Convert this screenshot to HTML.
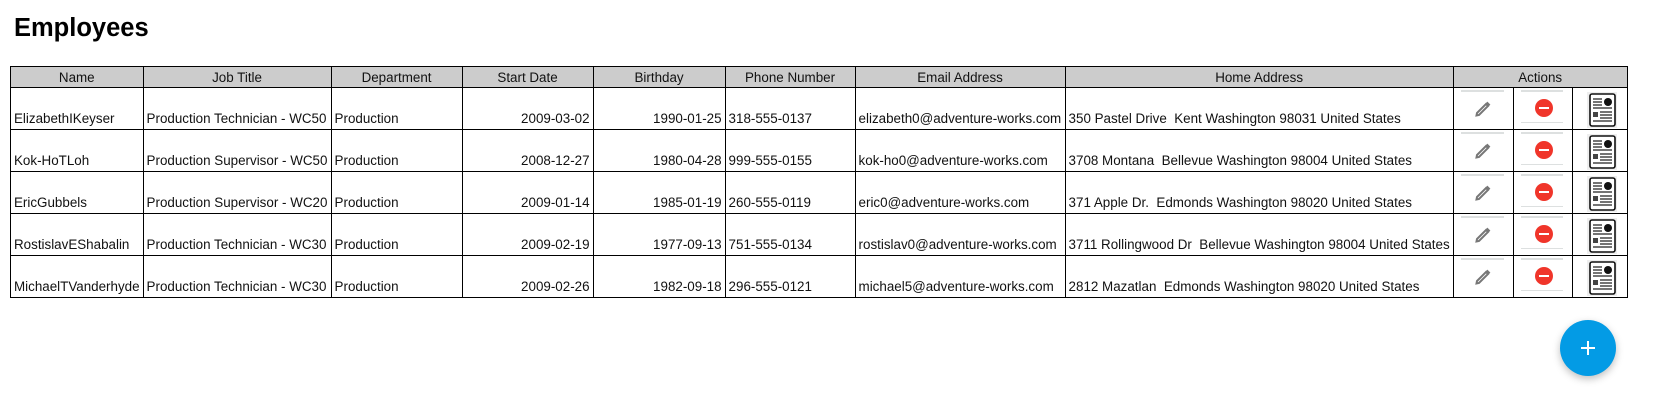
<!DOCTYPE html>
<html><head><meta charset="utf-8"><style>
body{margin:0;background:#fff;font-family:"Liberation Sans",Arial,sans-serif;width:1661px;height:415px;overflow:hidden;position:relative}
h1{position:absolute;left:14px;top:14px;margin:0;font-size:25.5px;font-weight:bold;color:#000}
table{position:absolute;left:10px;top:66px;border-collapse:collapse;table-layout:fixed;font-size:13.4px;color:#111}
th,td{border:1.5px solid #000;padding:0 3px;white-space:nowrap;overflow:visible}
th{background:#ccc;font-weight:normal;height:20px;padding:0 3px;text-align:center}
td{height:38px;vertical-align:bottom;padding-bottom:3px;padding-top:0}
td.r{text-align:right}
td.a{padding:0;position:relative;vertical-align:top}
.ln{position:absolute;height:2px;background:#dde0e0;left:7px;right:9px}
.pen{position:absolute;left:20px;top:12px}
.del{position:absolute;left:21px;top:11px;width:18px;height:18px;border-radius:50%;background:#f0352a}
.del:after{content:"";position:absolute;left:4px;top:8px;width:10px;height:2.4px;background:#fff}
.rep{position:absolute;left:14px;top:4px;width:30px;height:36px;background:#eee;z-index:2}
.fab{position:absolute;left:1560px;top:320px;width:56px;height:56px;border-radius:50%;background:#039be5;box-shadow:0 3px 8px rgba(0,0,0,.25)}
.fab:before{content:"";position:absolute;left:21px;top:27px;width:14px;height:2px;background:#fff}
.fab:after{content:"";position:absolute;left:27px;top:21px;width:2px;height:14px;background:#fff}
</style></head><body>
<h1>Employees</h1>
<table>
<colgroup><col style="width:132px"><col style="width:188px"><col style="width:131px"><col style="width:131px"><col style="width:132px"><col style="width:130px"><col style="width:210px"><col style="width:387px"><col style="width:60px"><col style="width:59px"><col style="width:55px"></colgroup>
<tr><th>Name</th><th>Job Title</th><th>Department</th><th>Start Date</th><th>Birthday</th><th>Phone Number</th><th>Email Address</th><th>Home Address</th><th colspan="3">Actions</th></tr>
<tr><td>ElizabethIKeyser</td><td>Production Technician - WC50</td><td>Production</td><td class="r">2009-03-02</td><td class="r">1990-01-25</td><td>318-555-0137</td><td>elizabeth0@adventure-works.com</td><td>350 Pastel Drive&nbsp; Kent Washington 98031 United States</td>
<td class="a"><div class="ln" style="top:2px"></div><svg class="pen" width="18" height="18" viewBox="0 0 18 18"><path d="M3 13 L12 4 L14 6 L5 15 L2.5 15.5 Z" fill="none" stroke="#777" stroke-width="2"/><path d="M12.5 2.5 L15.5 5.5" stroke="#777" stroke-width="2.5"/></svg></td>
<td class="a"><div class="ln" style="top:2px"></div><div class="del"></div><div class="ln" style="top:34px;height:1px"></div></td>
<td class="a"><svg class="rep" viewBox="0 0 30 36"><rect x="3" y="2" width="25" height="32" rx="2" fill="#fff" stroke="#111" stroke-width="1.6"/><path d="M6 7h9M6 10h9M6 13h9M6 16h19M13 20h12M13 23h12M13 26h12M6 29h19" stroke="#222" stroke-width="1.2"/><circle cx="21" cy="10" r="4" fill="#111"/><rect x="6" y="20" width="5" height="5" fill="#444"/></svg></td></tr>
<tr><td>Kok-HoTLoh</td><td>Production Supervisor - WC50</td><td>Production</td><td class="r">2008-12-27</td><td class="r">1980-04-28</td><td>999-555-0155</td><td>kok-ho0@adventure-works.com</td><td>3708 Montana&nbsp; Bellevue Washington 98004 United States</td>
<td class="a"><div class="ln" style="top:2px"></div><svg class="pen" width="18" height="18" viewBox="0 0 18 18"><path d="M3 13 L12 4 L14 6 L5 15 L2.5 15.5 Z" fill="none" stroke="#777" stroke-width="2"/><path d="M12.5 2.5 L15.5 5.5" stroke="#777" stroke-width="2.5"/></svg></td>
<td class="a"><div class="ln" style="top:2px"></div><div class="del"></div><div class="ln" style="top:34px;height:1px"></div></td>
<td class="a"><svg class="rep" viewBox="0 0 30 36"><rect x="3" y="2" width="25" height="32" rx="2" fill="#fff" stroke="#111" stroke-width="1.6"/><path d="M6 7h9M6 10h9M6 13h9M6 16h19M13 20h12M13 23h12M13 26h12M6 29h19" stroke="#222" stroke-width="1.2"/><circle cx="21" cy="10" r="4" fill="#111"/><rect x="6" y="20" width="5" height="5" fill="#444"/></svg></td></tr>
<tr><td>EricGubbels</td><td>Production Supervisor - WC20</td><td>Production</td><td class="r">2009-01-14</td><td class="r">1985-01-19</td><td>260-555-0119</td><td>eric0@adventure-works.com</td><td>371 Apple Dr.&nbsp; Edmonds Washington 98020 United States</td>
<td class="a"><div class="ln" style="top:2px"></div><svg class="pen" width="18" height="18" viewBox="0 0 18 18"><path d="M3 13 L12 4 L14 6 L5 15 L2.5 15.5 Z" fill="none" stroke="#777" stroke-width="2"/><path d="M12.5 2.5 L15.5 5.5" stroke="#777" stroke-width="2.5"/></svg></td>
<td class="a"><div class="ln" style="top:2px"></div><div class="del"></div><div class="ln" style="top:34px;height:1px"></div></td>
<td class="a"><svg class="rep" viewBox="0 0 30 36"><rect x="3" y="2" width="25" height="32" rx="2" fill="#fff" stroke="#111" stroke-width="1.6"/><path d="M6 7h9M6 10h9M6 13h9M6 16h19M13 20h12M13 23h12M13 26h12M6 29h19" stroke="#222" stroke-width="1.2"/><circle cx="21" cy="10" r="4" fill="#111"/><rect x="6" y="20" width="5" height="5" fill="#444"/></svg></td></tr>
<tr><td>RostislavEShabalin</td><td>Production Technician - WC30</td><td>Production</td><td class="r">2009-02-19</td><td class="r">1977-09-13</td><td>751-555-0134</td><td>rostislav0@adventure-works.com</td><td>3711 Rollingwood Dr&nbsp; Bellevue Washington 98004 United States</td>
<td class="a"><div class="ln" style="top:2px"></div><svg class="pen" width="18" height="18" viewBox="0 0 18 18"><path d="M3 13 L12 4 L14 6 L5 15 L2.5 15.5 Z" fill="none" stroke="#777" stroke-width="2"/><path d="M12.5 2.5 L15.5 5.5" stroke="#777" stroke-width="2.5"/></svg></td>
<td class="a"><div class="ln" style="top:2px"></div><div class="del"></div><div class="ln" style="top:34px;height:1px"></div></td>
<td class="a"><svg class="rep" viewBox="0 0 30 36"><rect x="3" y="2" width="25" height="32" rx="2" fill="#fff" stroke="#111" stroke-width="1.6"/><path d="M6 7h9M6 10h9M6 13h9M6 16h19M13 20h12M13 23h12M13 26h12M6 29h19" stroke="#222" stroke-width="1.2"/><circle cx="21" cy="10" r="4" fill="#111"/><rect x="6" y="20" width="5" height="5" fill="#444"/></svg></td></tr>
<tr><td>MichaelTVanderhyde</td><td>Production Technician - WC30</td><td>Production</td><td class="r">2009-02-26</td><td class="r">1982-09-18</td><td>296-555-0121</td><td>michael5@adventure-works.com</td><td>2812 Mazatlan&nbsp; Edmonds Washington 98020 United States</td>
<td class="a"><div class="ln" style="top:2px"></div><svg class="pen" width="18" height="18" viewBox="0 0 18 18"><path d="M3 13 L12 4 L14 6 L5 15 L2.5 15.5 Z" fill="none" stroke="#777" stroke-width="2"/><path d="M12.5 2.5 L15.5 5.5" stroke="#777" stroke-width="2.5"/></svg></td>
<td class="a"><div class="ln" style="top:2px"></div><div class="del"></div><div class="ln" style="top:34px;height:1px"></div></td>
<td class="a"><svg class="rep" viewBox="0 0 30 36"><rect x="3" y="2" width="25" height="32" rx="2" fill="#fff" stroke="#111" stroke-width="1.6"/><path d="M6 7h9M6 10h9M6 13h9M6 16h19M13 20h12M13 23h12M13 26h12M6 29h19" stroke="#222" stroke-width="1.2"/><circle cx="21" cy="10" r="4" fill="#111"/><rect x="6" y="20" width="5" height="5" fill="#444"/></svg></td></tr>
</table>
<div class="fab"></div>
</body></html>
